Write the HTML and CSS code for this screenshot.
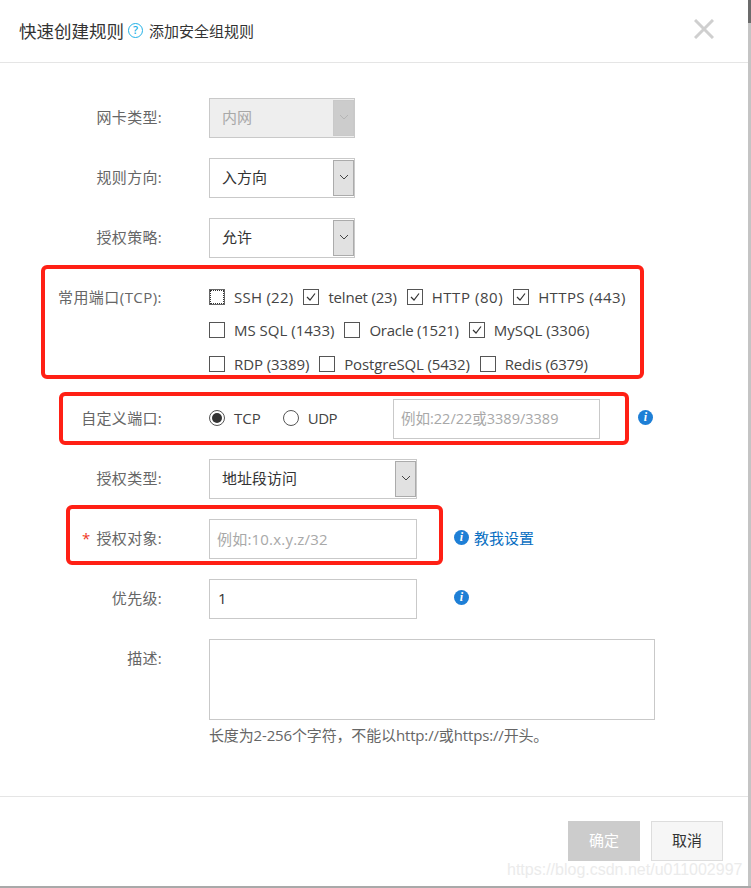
FILE: index.html
```html
<!DOCTYPE html>
<html lang="zh-CN">
<head>
<meta charset="utf-8">
<title>快速创建规则</title>
<link rel="stylesheet" href="styles.css">
</head>
<body>
<div class="window">
  <div class="dialog">
    <header class="head">
      <h1 class="title">快速创建规则</h1>
      <span class="help">?</span>
      <span class="sub">添加安全组规则</span>
      <svg class="close" width="20" height="20" viewBox="0 0 20 20"><path d="M1 1L19 19M19 1L1 19" stroke="#cfcfcf" stroke-width="3" fill="none"/></svg>
    </header>
    <main class="body">
      <div class="row">
        <label class="label">网卡类型:</label>
        <div class="select disabled"><span class="value">内网</span><span class="arrow"><svg width="10" height="6" viewBox="0 0 10 6"><path d="M1 1L5 5L9 1" stroke="#b5b5b5" fill="none"/></svg></span></div>
      </div>
      <div class="row">
        <label class="label">规则方向:</label>
        <div class="select"><span class="value">入方向</span><span class="arrow"><svg width="10" height="6" viewBox="0 0 10 6"><path d="M1 1L5 5L9 1" stroke="#444" fill="none"/></svg></span></div>
      </div>
      <div class="row">
        <label class="label">授权策略:</label>
        <div class="select"><span class="value">允许</span><span class="arrow"><svg width="10" height="6" viewBox="0 0 10 6"><path d="M1 1L5 5L9 1" stroke="#444" fill="none"/></svg></span></div>
      </div>
      <div class="row ports">
        <label class="label port-label">常用端口(TCP):</label>
        <div class="port-lines">
          <div class="port-line">
            <span class="check focus"></span><span class="opt o-ssh">SSH (22)</span>
            <span class="check"><svg width="14" height="14" viewBox="0 0 14 14"><path d="M3 7L6 10L11 3.500" stroke="#333" stroke-width="1.200" fill="none"/></svg></span><span class="opt o-telnet">telnet (23)</span>
            <span class="check"><svg width="14" height="14" viewBox="0 0 14 14"><path d="M3 7L6 10L11 3.500" stroke="#333" stroke-width="1.200" fill="none"/></svg></span><span class="opt o-http">HTTP (80)</span>
            <span class="check"><svg width="14" height="14" viewBox="0 0 14 14"><path d="M3 7L6 10L11 3.500" stroke="#333" stroke-width="1.200" fill="none"/></svg></span><span class="opt o-https">HTTPS (443)</span>
          </div>
          <div class="port-line">
            <span class="check"></span><span class="opt">MS SQL (1433)</span>
            <span class="check"></span><span class="opt o-oracle">Oracle (1521)</span>
            <span class="check"><svg width="14" height="14" viewBox="0 0 14 14"><path d="M3 7L6 10L11 3.500" stroke="#333" stroke-width="1.200" fill="none"/></svg></span><span class="opt">MySQL (3306)</span>
          </div>
          <div class="port-line">
            <span class="check"></span><span class="opt o-rdp">RDP (3389)</span>
            <span class="check"></span><span class="opt o-pg">PostgreSQL (5432)</span>
            <span class="check"></span><span class="opt o-redis">Redis (6379)</span>
          </div>
        </div>
      </div>
      <div class="row">
        <label class="label">自定义端口:</label>
        <div class="radios">
          <span class="radio on"></span><span class="opt tcp">TCP</span>
          <span class="radio"></span><span class="opt udp">UDP</span>
        </div>
        <div class="input port-input placeholder">例如:22/22或3389/3389</div>
        <span class="info port-info">i</span>
      </div>
      <div class="row">
        <label class="label">授权类型:</label>
        <div class="select wide"><span class="value">地址段访问</span><span class="arrow"><svg width="10" height="6" viewBox="0 0 10 6"><path d="M1 1L5 5L9 1" stroke="#444" fill="none"/></svg></span></div>
      </div>
      <div class="row">
        <label class="label"><span class="star">*</span>授权对象:</label>
        <div class="input wide placeholder target">例如:10.x.y.z/32</div>
        <span class="info">i</span>
        <a class="link">教我设置</a>
      </div>
      <div class="row">
        <label class="label">优先级:</label>
        <div class="input wide">1</div>
        <span class="info">i</span>
      </div>
      <div class="row desc">
        <label class="label">描述:</label>
        <div class="desc-col">
          <div class="textarea"></div>
          <p class="hint">长度为2-256个字符，不能以http://或https://开头。</p>
        </div>
      </div>
    </main>
    <footer class="foot">
      <button class="btn primary">确定</button>
      <button class="btn">取消</button>
    </footer>
    <span class="mark mark-ports"></span>
    <span class="mark mark-custom"></span>
    <span class="mark mark-target"></span>
    <span class="watermark">https://blog.csdn.net/u011002997</span>
  </div>
  <div class="scrollbar"><div class="thumb"></div></div>
</div>
</body>
</html>
```
FILE: styles.css
```css
* { box-sizing: border-box; }
html, body { margin: 0; height: 100%; }
body {
  background: #fff;
  font-family: "Open Sans", "Noto Sans CJK SC", sans-serif;
  font-size: 15px;
  color: #333;
  overflow: hidden;
}
.window { display: flex; height: 888px; padding-bottom: 2px; background: #a9a9a9; }
.dialog { position: relative; width: 748px; background: #fff; display: flex; flex-direction: column; }
.scrollbar { width: 3px; background: #c4c4c4; }
.thumb { height: 23px; background: #6b6b6b; }

.head { height: 63px; border-bottom: 1px solid #e5e5e5; display: flex; align-items: center; padding: 0 0 1px 19px; }
.title { margin: 0; font-size: 17.500px; font-weight: 400; color: #333; line-height: 24px; }
.help { width: 15px; height: 15px; border: 1.500px solid #22b1e6; border-radius: 50%; color: #22b1e6; font-size: 11px; font-weight: 600; line-height: 12px; text-align: center; margin-left: 4px; }
.sub { margin-left: 6px; font-size: 15px; color: #333; }
.close { margin-left: auto; margin-right: 34px; margin-top: -4px; }

.body { flex: 1; padding-top: 35px; }
.row { display: flex; align-items: center; margin-bottom: 20px; min-height: 40px; }
.label { width: 162px; margin-right: 47px; padding-bottom: 3px; text-align: right; color: #666; font-size: 15px; letter-spacing: .3px; white-space: nowrap; flex: none; }
.star { color: #f0361e; margin-right: 6px; font-size: 15px; }

.select { width: 146px; height: 40px; border: 1px solid #c9c9c9; display: flex; background: #fff; flex: none; }
.select.wide, .input.wide { width: 208px; }
.value { flex: 1; padding-left: 12px; line-height: 37px; font-size: 15px; color: #333; }
.arrow { width: 21px; margin: 1px 0; background: #e1e1e1; border: 1px solid #ababab; display: flex; align-items: center; justify-content: center; padding-bottom: 2px; }
.select.disabled { background: #eee; }
.select.disabled .value { color: #a8a8a8; }
.select.disabled .arrow { background: #ccc; border-color: #c9c9c9; }

.ports { align-items: flex-start; margin-bottom: 18px; padding-top: 2px; }
.port-label { line-height: 34px; padding-bottom: 0; letter-spacing: .45px; }
.port-line { display: flex; align-items: center; height: 33.500px; }
.check { width: 16px; height: 16px; border: 1px solid #555; display: flex; align-items: center; justify-content: center; flex: none; }
.check.focus { outline: 1px dotted #333; outline-offset: -2px; border-color: #666; }
.opt { margin-left: 9px; margin-right: 10px; white-space: nowrap; color: #444; font-size: 15px; }
.o-ssh { letter-spacing: .25px; }
.o-telnet { letter-spacing: -.2px; }
.o-http { letter-spacing: .55px; }
.o-https { letter-spacing: .4px; }
.o-oracle { letter-spacing: -.25px; }
.o-rdp { letter-spacing: -.1px; }
.o-pg { letter-spacing: -.15px; }
.o-redis { letter-spacing: -.15px; }

.radios { display: flex; align-items: center; width: 184px; flex: none; margin-bottom: 2px; }
.radio { width: 16px; height: 16px; border: 1px solid #555; border-radius: 50%; flex: none; display: flex; align-items: center; justify-content: center; }
.radio.on::after { content: ""; width: 10px; height: 10px; border-radius: 50%; background: #333; }
.tcp { margin-right: 22px; }
.udp { letter-spacing: -.5px; }

.input { height: 40px; border: 1px solid #c9c9c9; padding-left: 8px; line-height: 37px; font-size: 15px; color: #333; flex: none; }
.input.placeholder { color: #a8a8a8; padding-left: 7px; font-size: 14.500px; line-height: 38px; }
.input.target { font-size: 15px; letter-spacing: .2px; }
.port-input { width: 207px; }
.info { width: 15px; height: 15px; margin-bottom: 2px; border-radius: 50%; background: #1e7fd6; color: #fff; font: italic 700 12px/15px "Liberation Serif", serif; text-align: center; margin-left: 37px; flex: none; }
.port-info { margin-left: 38px; }
.link { margin-left: 5px; margin-bottom: 3px; font-size: 15px; color: #0a6fc2; }

.desc { align-items: flex-start; margin-bottom: 0; }
.desc .label { line-height: 38px; }
.textarea { width: 446px; height: 81px; border: 1px solid #c9c9c9; }
.hint { margin: 5px 0 0; font-size: 15px; color: #666; line-height: 20px; letter-spacing: -.15px; white-space: nowrap; }

.foot { height: 90px; border-top: 1px solid #e5e5e5; display: flex; justify-content: flex-end; gap: 11px; padding: 24px 25px 0 0; }
.btn { width: 72px; height: 40px; border: 1px solid #ddd; background: #f6f6f6; color: #333; font: inherit; font-size: 15px; padding: 0 0 3px; }
.btn.primary { background: #ccc; border-color: #ccc; color: #fff; }

.mark { position: absolute; border: 4px solid #ff2015; border-radius: 6px; pointer-events: none; }
.mark-ports { left: 41px; top: 265px; width: 603px; height: 114px; }
.mark-custom { left: 59px; top: 392px; width: 570px; height: 53px; }
.mark-target { left: 66px; top: 505px; width: 377px; height: 60px; }
.watermark { position: absolute; left: 507px; top: 860px; font: 16px/20px "Liberation Sans", sans-serif; color: #ebebeb; white-space: nowrap; }
```
